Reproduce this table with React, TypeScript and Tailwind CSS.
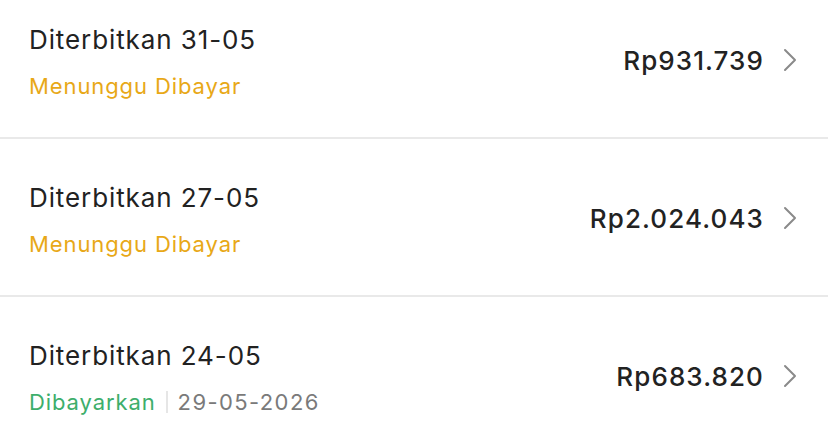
import React from "react";

type Row = {
  title: string;
  amount: string;
  status: string;
  paid?: boolean;
  date?: string;
};

const rows: Row[] = [
  { title: "Diterbitkan 31-05", amount: "Rp931.739", status: "Menunggu Dibayar" },
  { title: "Diterbitkan 27-05", amount: "Rp2.024.043", status: "Menunggu Dibayar" },
  { title: "Diterbitkan 24-05", amount: "Rp683.820", status: "Dibayarkan", paid: true, date: "29-05-2026" },
];

function Chevron() {
  return (
    <svg width="14" height="24" viewBox="0 0 14 24" fill="none" className="shrink-0">
      <polyline points="2,2 12,12 2,22" stroke="#8a8a8a" strokeWidth="2" strokeLinecap="round" strokeLinejoin="round" />
    </svg>
  );
}

export default function App() {
  return (
    <div
      className="w-[828px] h-[445px] overflow-hidden bg-white"
      style={{ fontFamily: "Inter, 'Noto Sans', sans-serif" }}
    >
      <div className="-mt-[19px]">
        {rows.map((r, i) => (
          <div key={i}>
            <div className="flex justify-between h-[156px] pl-[29px] pr-[31px]">
              <div className="flex flex-col pt-[43px]">
                <div className="text-[26px] leading-[32px] text-[#222222] tracking-[0.9px]">{r.title}</div>
                <div className="mt-[16px] flex items-center text-[22px] leading-[28px] tracking-[0.9px]">
                  {r.paid ? (
                    <>
                      <span className="text-[#3dae6b]">{r.status}</span>
                      <span className="mx-[10px] h-[22px] w-[2px] bg-[#e6e6e6]" />
                      <span className="text-[#7a7a7a] tracking-[1.4px]">{r.date}</span>
                    </>
                  ) : (
                    <span className="text-[#e8a817]">{r.status}</span>
                  )}
                </div>
              </div>
              <div className="flex items-center gap-[19px] self-center mt-[2px]">
                <span className="text-[26px] font-medium text-[#222222] tracking-[1.1px]">{r.amount}</span>
                <Chevron />
              </div>
            </div>
            {i < rows.length - 1 && <div className="h-[2px] bg-[#e9e9e9]" />}
          </div>
        ))}
      </div>
    </div>
  );
}
